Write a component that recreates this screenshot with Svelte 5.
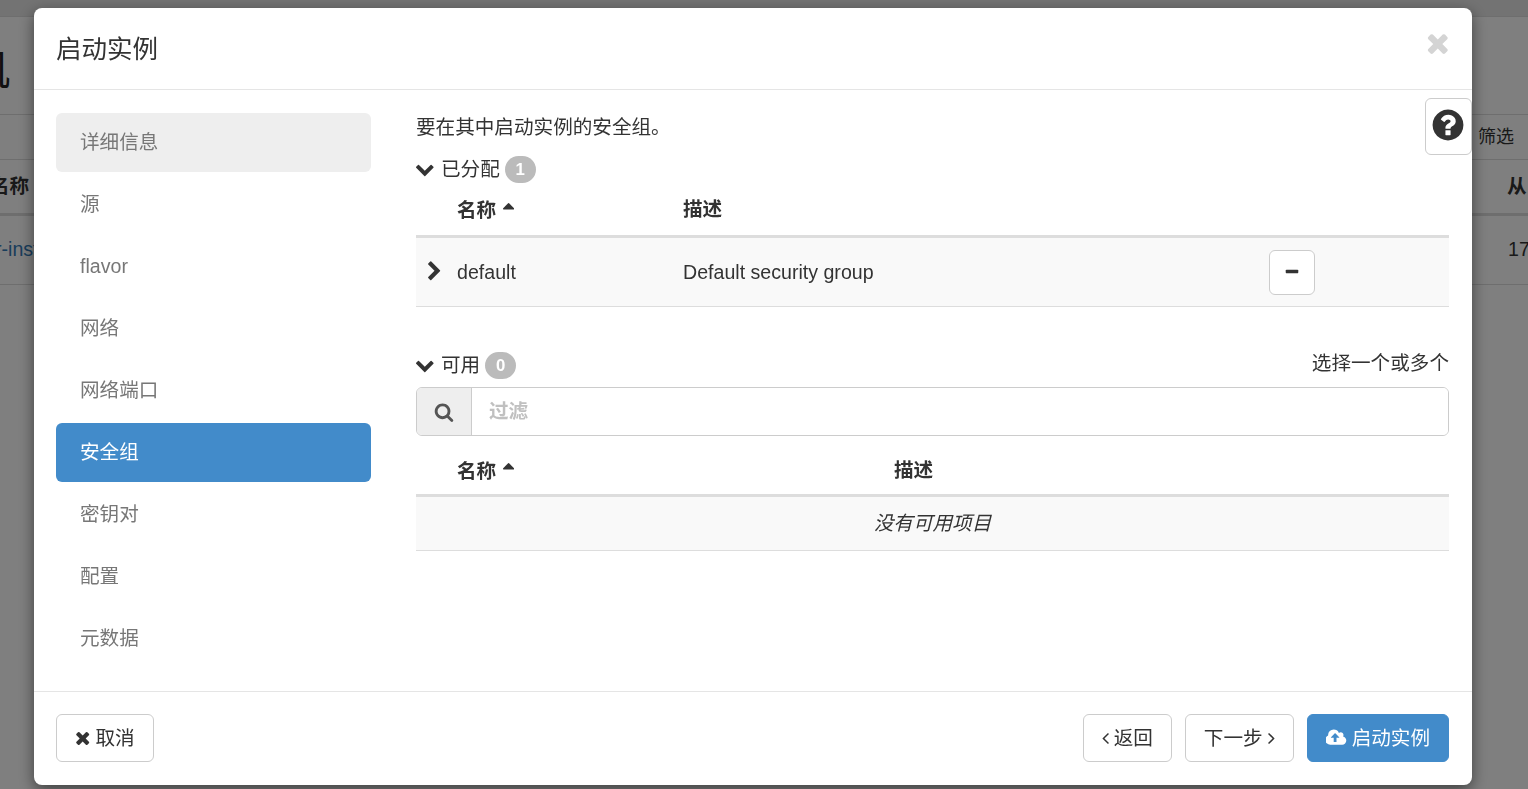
<script lang="ts">
  // Font Awesome 4 glyph outlines (1792 grid unless noted)
  const icons = {
    times: 'M1490 1322q0 40-28 68l-136 136q-28 28-68 28t-68-28l-294-294-294 294q-28 28-68 28t-68-28l-136-136q-28-28-28-68t28-68l294-294-294-294q-28-28-28-68t28-68l136-136q28-28 68-28t68 28l294 294 294-294q28-28 68-28t68 28l136 136q28 28 28 68t-28 68l-294 294 294 294q28 28 28 68z',
    down: 'M1683 808l-742 741q-19 19-45 19t-45-19l-742-741q-19-19-19-45.5t19-45.5l166-165q19-19 45-19t45 19l531 531 531-531q19-19 45-19t45 19l166 165q19 19 19 45.5t-19 45.5z',
    right: 'M1363 877l-742 742q-19 19-45 19t-45-19l-166-166q-19-19-19-45t19-45l531-531-531-531q-19-19-19-45t19-45l166-166q19-19 45-19t45 19l742 742q19 19 19 45t-19 45z',
    help: 'M1024 1376v-192q0-14-9-23t-23-9h-192q-14 0-23 9t-9 23v192q0 14 9 23t23 9h192q14 0 23-9t9-23zm256-672q0-88-55.5-163t-138.5-116-170-41q-243 0-371 213-15 24 8 42l132 100q7 6 19 6 16 0 25-12 53-68 86-92 34-24 86-24 48 0 85.5 26t37.5 59q0 38-20 61t-68 45q-63 28-115.5 86.5t-52.5 125.5v36q0 14 9 23t23 9h192q14 0 23-9t9-23q0-19 21.5-49.5t54.5-49.5q32-18 49-28.5t46-35 44.5-48 28-60.5 12.5-81zm384 192q0 209-103 385.5t-279.5 279.5-385.5 103-385.5-103-279.5-279.5-103-385.5 103-385.5 279.5-279.5 385.5-103 385.5 103 279.5 279.5 103 385.5z',
    search: 'M1216 832q0-185-131.5-316.5t-316.5-131.5-316.5 131.5-131.5 316.5 131.5 316.5 316.5 131.5 316.5-131.5 131.5-316.5zm512 832q0 52-38 90t-90 38q-54 0-90-38l-343-342q-179 124-399 124-143 0-273.5-55.5t-225-150-150-225-55.5-273.5 55.5-273.5 150-225 225-150 273.5-55.5 273.5 55.5 225 150 150 225 55.5 273.5q0 220-124 399l343 343q37 37 37 90z',
    minus: 'M1600 736v192q0 40-28 68t-68 28h-1216q-40 0-68-28t-28-68v-192q0-40 28-68t68-28h1216q40 0 68 28t28 68z',
    sort: 'M1408 704q0 26-19 45t-45 19h-896q-26 0-45-19t-19-45 19-45l448-448q19-19 45-19t45 19l448 448q19 19 19 45z',
    angleLeft: 'M1203 544q0 13-10 23l-393 393 393 393q10 10 10 23t-10 23l-50 50q-10 10-23 10t-23-10l-466-466q-10-10-10-23t10-23l466-466q10-10 23-10t23 10l50 50q10 10 10 23z',
    angleRight: 'M1171 960q0 13-10 23l-466 466q-10 10-23 10t-23-10l-50-50q-10-10-10-23t10-23l393-393-393-393q-10-10-10-23t10-23l50-50q10-10 23-10t23 10l466 466q10 10 10 23z',
    cloud: 'M1216 864q0-14-9-23l-352-352q-9-9-23-9t-23 9l-351 351q-10 12-10 24 0 14 9 23t23 9h224v352q0 13 9.5 22.5t22.5 9.5h192q13 0 22.5-9.5t9.5-22.5v-352h224q13 0 22.5-9.5t9.5-22.5zm640 288q0 159-112.5 271.5t-271.5 112.5h-1088q-185 0-316.5-131.5t-131.5-316.5q0-130 70-240t188-165q-2-30-2-43 0-212 150-362t362-150q156 0 285.5 87t188.5 231q71-62 166-62 106 0 181 75t75 181q0 76-41 138 130 31 213.5 135.5t83.5 238.5z'
  };

  // glyph advance widths, the outlines are centred on the 1792 box
  const advance = { times: 1408, sort: 1024, angleLeft: 640, angleRight: 640, cloud: 1920 };

  function box(name) {
    const w = advance[name] ?? 1792;
    const x = name === 'cloud' ? 0 : (1792 - w) / 2;
    return { x, w };
  }

  const steps = ['详细信息', '源', 'flavor', '网络', '网络端口', '安全组', '密钥对', '配置', '元数据'];
  const activeStep = '安全组';
</script>

{#snippet icon(name, size)}
  <svg class="icon" width={size * box(name).w / 1792} height={size} viewBox="{box(name).x} 0 {box(name).w} 1792" fill="currentColor" aria-hidden="true">
    <path d={icons[name]} />
  </svg>
{/snippet}

<div class="page">
  <div class="page-top"></div>
  <div class="page-title">机</div>
  <div class="page-filter"><span>筛选</span></div>
  <div class="page-head"><b class="h1">名称</b><b class="h2">从</b></div>
  <div class="page-row"><a class="r1" href="#x">r-instance</a><span class="r2">172</span></div>
</div>
<div class="backdrop"></div>

<div class="modal">
  <header class="modal-header">
    <h4>启动实例</h4>
    <span class="close">{@render icon('times', 30)}</span>
  </header>

  <div class="modal-body">
    <nav class="steps">
      {#each steps as step}
        <div class="step" class:selected={step === '详细信息'} class:active={step === activeStep}>{step}</div>
      {/each}
    </nav>

    <main class="pane">
      <p class="intro">要在其中启动实例的安全组。</p>

      <div class="section-title first">
        <span class="chev">{@render icon('down', 19.6)}</span>
        <span class="label">已分配</span>
        <span class="badge">1</span>
      </div>
      <table class="allocated">
        <thead>
          <tr>
            <th class="c-toggle"></th>
            <th class="c-name">名称 <span class="sort">{@render icon('sort', 19.6)}</span></th>
            <th class="c-desc">描述</th>
            <th></th>
          </tr>
        </thead>
        <tbody>
          <tr>
            <td class="toggle">{@render icon('right', 21)}</td>
            <td>default</td>
            <td>Default security group</td>
            <td class="c-action"><button class="btn minus">{@render icon('minus', 16)}</button></td>
          </tr>
        </tbody>
      </table>

      <div class="section-row">
        <div class="section-title">
          <span class="chev">{@render icon('down', 19.6)}</span>
          <span class="label">可用</span>
          <span class="badge">0</span>
        </div>
        <span class="hint">选择一个或多个</span>
      </div>
      <div class="filter">
        <span class="addon">{@render icon('search', 20)}</span>
        <input placeholder="过滤" />
      </div>
      <table class="available">
        <thead>
          <tr>
            <th class="c-toggle"></th>
            <th class="c-name2">名称 <span class="sort">{@render icon('sort', 19.6)}</span></th>
            <th>描述</th>
          </tr>
        </thead>
        <tbody>
          <tr><td colspan="3" class="empty">没有可用项目</td></tr>
        </tbody>
      </table>
    </main>
  </div>

  <footer class="modal-footer">
    <button class="btn">{@render icon('times', 19.6)} 取消</button>
    <div class="spacer"></div>
    <button class="btn">{@render icon('angleLeft', 19.6)} 返回</button>
    <button class="btn">下一步 {@render icon('angleRight', 19.6)}</button>
    <button class="btn primary">{@render icon('cloud', 19.6)} 启动实例</button>
  </footer>

  <button class="help">{@render icon('help', 36)}</button>
</div>

<style>
  :global(body) {
    margin: 0;
    overflow: hidden;
    font-family: "Liberation Sans", "Noto Sans CJK SC", sans-serif;
    font-size: 19.6px;
    line-height: 1.43;
    color: #333;
  }

  .page {
    position: relative;
    height: 789px;
    overflow: hidden;
    background: #fff;
  }
  .page-top {
    height: 16px;
    background: #e6e6e6;
    border-bottom: 1px solid #ddd;
  }
  .page-title {
    position: absolute;
    left: -32px;
    top: 41px;
    font-size: 42px;
    line-height: 60px;
    color: #222;
  }
  .page-filter {
    position: absolute;
    right: 0;
    top: 114px;
    left: 0;
    height: 44px;
    border-top: 1px solid #ddd;
    border-bottom: 1px solid #ddd;
    color: #333;
  }
  .page-filter span {
    position: absolute;
    left: 1478px;
    top: 10px;
    font-size: 18px;
  }
  .page-head {
    position: absolute;
    top: 159px;
    left: 0;
    right: 0;
    height: 54px;
    border-bottom: 3px solid #ddd;
  }
  .page-head b {
    position: absolute;
    top: 13px;
  }
  .h1 { left: -10px; }
  .h2 { left: 1507px; }
  .page-row {
    position: absolute;
    top: 217px;
    left: 0;
    right: 0;
    height: 67px;
    border-bottom: 1px solid #ddd;
    white-space: nowrap;
  }
  .page-row > * {
    position: absolute;
    top: 18px;
  }
  .r1 { left: -5px; color: #337ab7; text-decoration: none; }
  .r2 { left: 1508px; }

  .backdrop {
    position: fixed;
    inset: 0;
    background: rgba(0, 0, 0, 0.5);
  }

  .modal {
    position: fixed;
    left: 34px;
    top: 8px;
    width: 1438px;
    height: 777px;
    display: flex;
    flex-direction: column;
    background: #fff;
    border-radius: 8px;
    box-shadow: 0 5px 15px rgba(0, 0, 0, 0.5);
  }

  .modal-header {
    height: 82px;
    box-sizing: border-box;
    flex: none;
    display: flex;
    justify-content: space-between;
    padding: 0 22px;
    border-bottom: 1px solid #e5e5e5;
  }
  .modal-header h4 {
    margin: 23px 0 0;
    font-size: 25.5px;
    font-weight: 400;
    line-height: 36px;
  }
  .close {
    color: #d4d4d4;
    margin-top: 19px;
  }

  .modal-body {
    flex: 1;
    display: flex;
    padding: 23px 23px 0 22px;
    min-height: 0;
  }

  .steps {
    width: 315px;
    flex: none;
    display: flex;
    flex-direction: column;
    gap: 3px;
    margin-right: 45px;
  }
  .step {
    height: 59px;
    line-height: 59px;
    padding: 0 24px;
    border-radius: 6px;
    color: #777;
  }
  .step.selected {
    background: #eee;
  }
  .step.active {
    background: #428bca;
    color: #fff;
  }

  .pane {
    flex: 1;
    min-width: 0;
  }
  .intro {
    margin: 0;
    line-height: 28px;
  }

  .section-title {
    display: flex;
    align-items: center;
    gap: 5px;
    height: 30px;
  }
  .section-title.first {
    margin-top: 13px;
  }
  .label {
    margin-left: 1px;
  }
  .chev {
    display: flex;
    width: 20px;
    margin-left: -1px;
    justify-content: center;
  }
  .badge {
    min-width: 11px;
    height: 27px;
    line-height: 27px;
    padding: 0 10px;
    box-sizing: content-box;
    background: #bbb;
    color: #fff;
    font-size: 16.8px;
    font-weight: 700;
    text-align: center;
    border-radius: 14px;
  }
  .section-row {
    display: flex;
    justify-content: space-between;
    margin-top: 43px;
  }
  .hint {
    line-height: 26px;
  }

  table {
    width: 100%;
    border-collapse: collapse;
    table-layout: fixed;
  }
  th {
    font-weight: 700;
    text-align: left;
    padding: 0;
    border-bottom: 3px solid #ddd;
  }
  td {
    padding: 0;
    background: #f9f9f9;
    border-bottom: 1px solid #ddd;
  }
  .allocated th { height: 51px; }
  .allocated td { height: 68px; }
  .available th { height: 48px; padding-top: 10px; }
  .available td { height: 53px; }
  .c-toggle { width: 41px; }
  .c-name { width: 226px; }
  .c-name2 { width: 437px; }
  .c-desc { width: 586px; }
  .sort {
    color: #333;
    margin-left: 1px;
    vertical-align: 2px;
  }
  .toggle {
    padding-left: 8px;
  }
  .toggle .icon {
    vertical-align: -3px;
    margin-top: -2px;
  }
  .empty {
    text-align: center;
    font-style: italic;
  }

  .filter {
    display: flex;
    height: 49px;
    box-sizing: border-box;
    margin-top: 7px;
    border: 1px solid #ccc;
    border-radius: 6px;
    overflow: hidden;
  }
  .addon {
    width: 54px;
    flex: none;
    display: flex;
    align-items: center;
    justify-content: center;
    background: #eee;
    border-right: 1px solid #ccc;
    color: #555;
  }
  .filter input {
    flex: 1;
    border: 0;
    outline: 0;
    padding: 0 17px;
    font: inherit;
    font-weight: 700;
    color: #555;
  }
  .filter input::placeholder {
    color: #c0c0c0;
  }

  .modal-footer {
    height: 94px;
    flex: none;
    box-sizing: border-box;
    display: flex;
    align-items: flex-start;
    gap: 13px;
    padding: 22px 23px 0 22px;
    border-top: 1px solid #e5e5e5;
  }
  .spacer {
    flex: 1;
  }

  .btn {
    height: 48px;
    padding: 0 18px;
    background: #fff;
    border: 1px solid #ccc;
    border-radius: 6px;
    font: inherit;
    color: #333;
    display: inline-flex;
    align-items: center;
    justify-content: center;
    gap: 5px;
    white-space: nowrap;
  }
  .btn.primary {
    background: #428bca;
    border-color: #428bca;
    color: #fff;
  }
  .btn.minus {
    width: 46px;
    height: 45px;
    padding: 0;
  }
  .c-action {
    vertical-align: middle;
  }

  .help {
    position: absolute;
    left: 1391px;
    top: 90px;
    width: 47px;
    height: 57px;
    padding: 0 1px 4px 0;
    background: #fff;
    border: 1px solid #ccc;
    border-radius: 6px;
    color: #333;
  }
  .icon {
    display: inline-block;
    vertical-align: middle;
  }
</style>
